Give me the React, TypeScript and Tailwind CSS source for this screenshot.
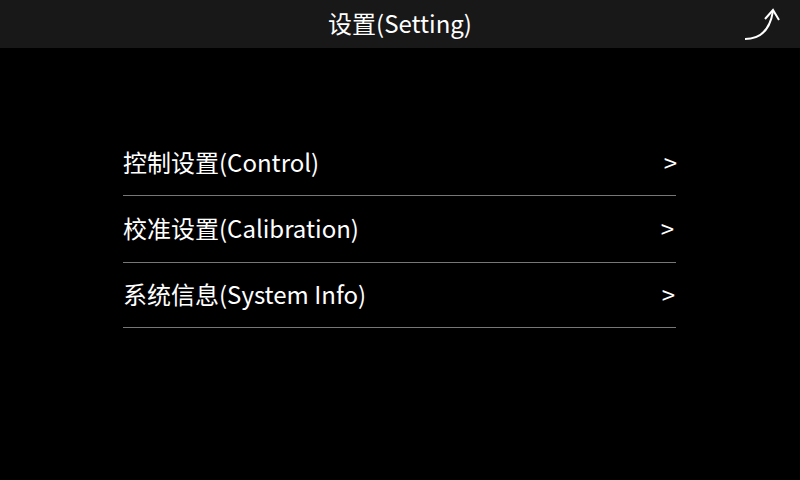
const rows = [
  { label: "控制设置(Control)", h: "h-[67px] pb-px", pr: "pr-0" },
  { label: "校准设置(Calibration)", h: "h-[67px] pb-[2px]", pr: "pr-[3px]" },
  { label: "系统信息(System Info)", h: "h-[65px] pb-[2px]", pr: "pr-[2px]" },
];

export default function App() {
  return (
    <div className="flex h-[480px] w-[800px] flex-col overflow-hidden bg-black text-white font-['Noto_Sans_CJK_SC',sans-serif]">
      <div className="relative flex h-12 items-center justify-center bg-[#181818] pb-0.5 text-2xl">
        <span>设置(Setting)</span>
        <svg className="absolute right-5 top-2" width="36" height="34" viewBox="0 0 36 34" fill="none" stroke="white" strokeWidth="2">
          <path d="M1 31 C16 31 26 22 29 3" />
          <path d="M21 11 L29 2 L35 12" />
        </svg>
      </div>
      <div className="ml-[123px] mt-[81px] flex w-[553px] flex-col">
        {rows.map((row) => (
          <div key={row.label} className={`flex items-center justify-between border-b border-[#777] text-2xl ${row.h} ${row.pr}`}>
            <span>{row.label}</span>
            <span className="-mr-px">&gt;</span>
          </div>
        ))}
      </div>
    </div>
  );
}
